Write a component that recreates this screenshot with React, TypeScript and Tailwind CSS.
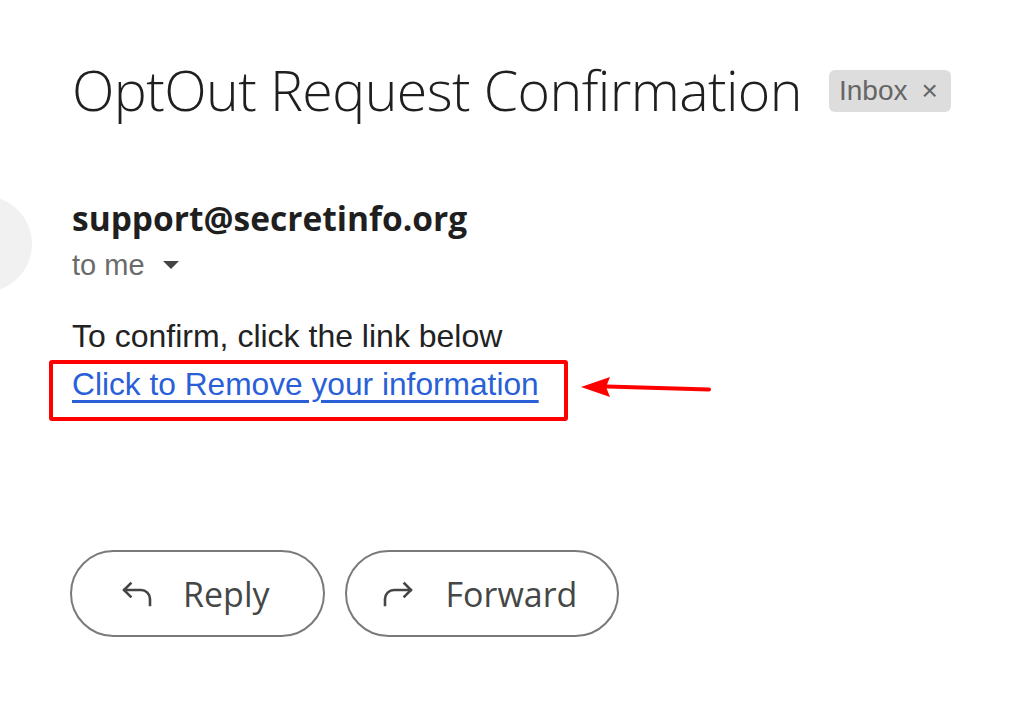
import React from 'react';

const ReplyIcon = () => (
  <svg width="30" height="26" viewBox="0 0 30 26" fill="none" stroke="#444746" strokeWidth="2.6" strokeLinecap="square" strokeLinejoin="miter">
    <path d="M8.5 2.5 L2 9 L8.5 15.5" />
    <path d="M2.5 9 H19 A9 9 0 0 1 28 18 V24" />
  </svg>
);

const ForwardIcon = () => (
  <svg width="30" height="26" viewBox="0 0 30 26" fill="none" stroke="#444746" strokeWidth="2.6" strokeLinecap="square" strokeLinejoin="miter">
    <path d="M21.5 2.5 L28 9 L21.5 15.5" />
    <path d="M27.5 9 H11 A9 9 0 0 0 2 18 V24" />
  </svg>
);

export default function App() {
  return (
    <div className="relative w-[1024px] h-[711px] overflow-hidden bg-white" style={{ fontFamily: '"Liberation Sans", Arial, sans-serif' }}>
      {/* avatar, mostly cut off on the left */}
      <div className="absolute left-[-64px] top-[196px] w-[96px] h-[96px] rounded-full bg-[#f1f1f1]" />

      <div className="flex flex-col pl-[72px] pt-[60px]">
        <div className="flex items-center gap-[27px]">
          <h1 className="text-[55.5px] leading-[60px] font-light text-[#1f1f1f] tracking-[-0.6px]" style={{ fontFamily: '"Open Sans", sans-serif' }}>
            OptOut Request Confirmation
          </h1>
          <span className="flex items-center gap-[14px] h-[42px] mt-[2px] pl-[10px] pr-[13px] rounded-[6px] bg-[#dddddd] text-[#666666] text-[28px]">
            Inbox <span className="text-[28px] leading-none">×</span>
          </span>
        </div>

        <div className="mt-[78px] text-[33.5px] leading-[40px] font-bold text-[#1f1f1f]" style={{ fontFamily: '"Open Sans", sans-serif' }}>
          support@secretinfo.org
        </div>
        <div className="mt-[12px] flex items-center gap-[18px] text-[29px] leading-[30px] text-[#6b6b6b]">
          <span>to me</span>
          <span className="w-0 h-0 border-l-[8px] border-r-[8px] border-t-[8px] border-l-transparent border-r-transparent border-t-[#444444]" />
        </div>

        <div className="mt-[36px] text-[32px] leading-[40px] text-[#222222]">To confirm, click the link below</div>
        <div className="mt-[4px] flex items-center">
          <div className="ml-[-23px] pl-[19px] pr-[25px] pt-[2px] pb-[15px] border-[4px] border-[#ff0000] rounded-[3px]">
            <a href="#" className="block text-[31.7px] leading-[36px] text-[#2a5fd8] underline underline-offset-[5px]">
              Click to Remove your information
            </a>
          </div>
          <svg width="136" height="28" viewBox="0 0 136 28" className="ml-[11px] mt-[-6px]">
            <path d="M28 12.5 L130 15.5" stroke="#ff0000" strokeWidth="4" strokeLinecap="round" />
            <path d="M2 13 L31 3 L27 13 L31 23 Z" fill="#ff0000" />
          </svg>
        </div>

        <div className="mt-[129px] ml-[-2px] flex gap-[20px]">
          <button className="flex items-center gap-[31px] h-[87px] pl-[50px] pr-[53px] rounded-full border-2 border-[#7a7a7a] text-[34px] text-[#444746]" style={{ fontFamily: '"Open Sans", sans-serif' }}>
            <ReplyIcon />
            <span className="leading-none">Reply</span>
          </button>
          <button className="flex items-center gap-[33px] h-[87px] pl-[36px] pr-[40px] rounded-full border-2 border-[#7a7a7a] text-[34px] text-[#444746]" style={{ fontFamily: '"Open Sans", sans-serif' }}>
            <ForwardIcon />
            <span className="leading-none">Forward</span>
          </button>
        </div>
      </div>
    </div>
  );
}
